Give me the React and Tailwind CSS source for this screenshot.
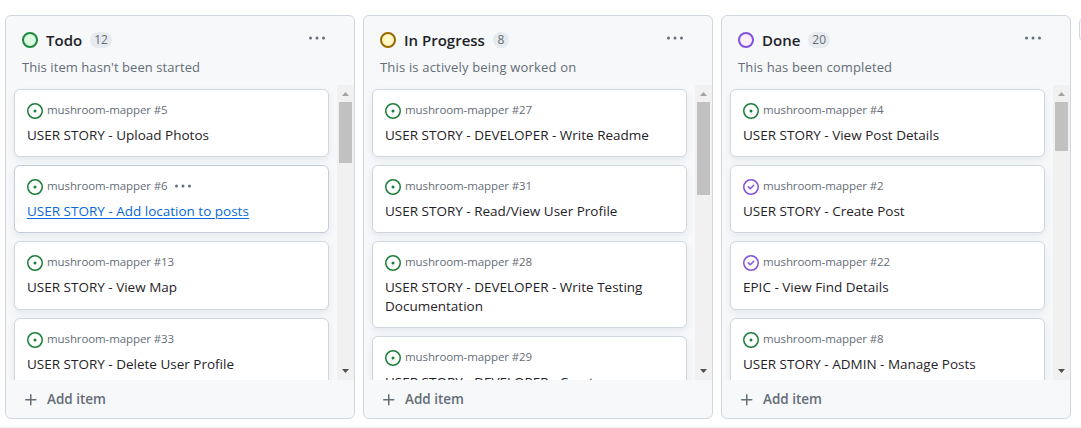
import React from "react";

const columns = [
  {
    title: "Todo",
    count: 12,
    note: "This item hasn't been started",
    noteClass: "tracking-[0.07px]",
    dot: "border-[#1f883d] bg-[#dafbe1]",
    thumb: "h-[61px]",
    cards: [
      { id: 5, title: "USER STORY - Upload Photos" },
      { id: 6, title: "USER STORY - Add location to posts", hovered: true },
      { id: 13, title: "USER STORY - View Map" },
      { id: 33, title: "USER STORY - Delete User Profile" },
    ],
  },
  {
    title: "In Progress",
    count: 8,
    note: "This is actively being worked on",
    noteClass: "tracking-[0.18px]",
    dot: "border-[#9a6700] bg-[#fff8c5]",
    thumb: "h-[93px]",
    cards: [
      { id: 27, title: "USER STORY - DEVELOPER - Write Readme" },
      { id: 31, title: "USER STORY - Read/View User Profile" },
      { id: 28, title: "USER STORY - DEVELOPER - Write Testing Documentation" },
      { id: 29, title: "USER STORY - DEVELOPER - Create" },
    ],
  },
  {
    title: "Done",
    count: 20,
    note: "This has been completed",
    noteClass: "tracking-[0.13px]",
    dot: "border-[#8250df] bg-[#fbefff]",
    thumb: "h-[49px]",
    cards: [
      { id: 4, title: "USER STORY - View Post Details" },
      { id: 2, title: "USER STORY - Create Post", closed: true },
      { id: 22, title: "EPIC - View Find Details", closed: true },
      { id: 8, title: "USER STORY - ADMIN - Manage Posts" },
    ],
  },
];

function IssueIcon({ closed }) {
  return closed ? (
    <svg viewBox="0 0 16 16" className="mt-px size-4 shrink-0 fill-[#8250df]">
      <path d="M11.28 6.78a.75.75 0 0 0-1.06-1.06L7.25 8.69 5.78 7.22a.75.75 0 0 0-1.06 1.06l2 2a.75.75 0 0 0 1.06 0l3.5-3.5Z" />
      <path d="M16 8A8 8 0 1 1 0 8a8 8 0 0 1 16 0Zm-1.5 0a6.5 6.5 0 1 0-13 0 6.5 6.5 0 0 0 13 0Z" />
    </svg>
  ) : (
    <svg viewBox="0 0 16 16" className="mt-px size-4 shrink-0 fill-[#1a7f37]">
      <path d="M8 9.5a1.5 1.5 0 1 0 0-3 1.5 1.5 0 0 0 0 3Z" />
      <path d="M8 0a8 8 0 1 1 0 16A8 8 0 0 1 8 0ZM1.5 8a6.5 6.5 0 1 0 13 0 6.5 6.5 0 0 0-13 0Z" />
    </svg>
  );
}

function Kebab({ className }) {
  return (
    <svg viewBox="0 0 16 16" className={`fill-[#656d76] ${className}`}>
      <path d="M0 8a1.5 1.5 0 1 1 3 0 1.5 1.5 0 0 1-3 0Zm6.5 0a1.5 1.5 0 1 1 3 0 1.5 1.5 0 0 1-3 0ZM14.5 6.5a1.5 1.5 0 1 1 0 3 1.5 1.5 0 0 1 0-3Z" />
    </svg>
  );
}

function Card({ id, title, closed, hovered }) {
  return (
    <div
      className={`shrink-0 rounded-md border bg-white px-3 pt-3 pb-[11.27px] shadow-[0_3px_6px_rgba(140,149,159,0.15)] ${
        hovered ? "border-[#c4cdd9]" : "border-[#d0d7de]"
      }`}
    >
      <div className="flex h-6 items-start">
        <IssueIcon closed={closed} />
        <span className="ml-1 text-[11.5px] leading-4 tracking-[-0.1px] text-[#656d76]">mushroom-mapper #{id}</span>
        {hovered && <Kebab className="ml-[7px] h-4 w-4" />}
      </div>
      <div
        className={`text-[13.5px] leading-[18.9px] ${
          hovered ? "text-[#0969da] underline underline-offset-2" : "text-[#1f2328]"
        }`}
      >
        {title}
      </div>
    </div>
  );
}

function Scrollbar({ thumb }) {
  return (
    <div className="flex w-[17px] shrink-0 flex-col items-center bg-[#f1f1f1]">
      <svg viewBox="0 0 17 17" className="size-[17px] shrink-0 fill-[#a3a3a3]">
        <path d="M5 11 8.5 7 12 11Z" />
      </svg>
      <div className={`w-[13px] bg-[#c1c1c1] ${thumb}`} />
      <svg viewBox="0 0 17 17" className="mt-auto size-[17px] shrink-0 fill-[#505050]">
        <path d="M5 6 12 6 8.5 10Z" />
      </svg>
    </div>
  );
}

function Column({ column }) {
  return (
    <section className="flex h-[404px] w-[350px] shrink-0 flex-col overflow-hidden rounded-md border border-[#d0d7de] bg-[#f6f8fa]">
      <header className="flex h-[69px] shrink-0 flex-col px-4 pt-4">
        <div className="flex h-4 items-center">
          <span className={`size-4 rounded-full border-2 ${column.dot}`} />
          <h2 className="ml-2 text-[15px] leading-4 font-semibold text-[#1f2328]">{column.title}</h2>
          <span className="ml-2 flex h-4 items-center rounded-full bg-[#e7eaef] px-1 text-[12px] font-medium text-[#656d76]">
            <span className="min-w-2 text-center">{column.count}</span>
          </span>
          <Kebab className="mr-[13px] mb-[5px] ml-auto size-4" />
        </div>
        <p className={`mt-[9px] text-[13px] leading-5 text-[#656d76] ${column.noteClass}`}>{column.note}</p>
      </header>
      <div className="flex h-[295px] shrink-0">
        <div className="flex flex-1 flex-col gap-2 overflow-hidden px-2 pt-1">
          {column.cards.map((card) => (
            <Card key={card.id} {...card} />
          ))}
        </div>
        <Scrollbar thumb={column.thumb} />
      </div>
      <footer className="flex flex-1 items-center px-4 pt-px text-[13.5px] font-semibold text-[#656d76]">
        <svg viewBox="0 0 16 16" className="ml-px size-4 fill-[#656d76]">
          <path d="M7.75 2a.75.75 0 0 1 .75.75V7h4.25a.75.75 0 0 1 0 1.5H8.5v4.25a.75.75 0 0 1-1.5 0V8.5H2.75a.75.75 0 0 1 0-1.5H7V2.75A.75.75 0 0 1 7.75 2Z" />
        </svg>
        <span className="ml-2">Add item</span>
      </footer>
    </section>
  );
}

export default function App() {
  return (
    <main className="flex h-[428px] w-full flex-col overflow-hidden border-b border-[#eeeff1] bg-white font-['Open_Sans','Noto_Sans',sans-serif]">
      <div className="flex gap-2 pt-[15px] pl-[5px]">
        {columns.map((column) => (
          <Column key={column.title} column={column} />
        ))}
        <button className="mt-0.5 h-[25px] w-8 shrink-0 rounded-md border border-[#d0d7de] bg-[#f6f8fa]" aria-label="Add column" />
      </div>
    </main>
  );
}
